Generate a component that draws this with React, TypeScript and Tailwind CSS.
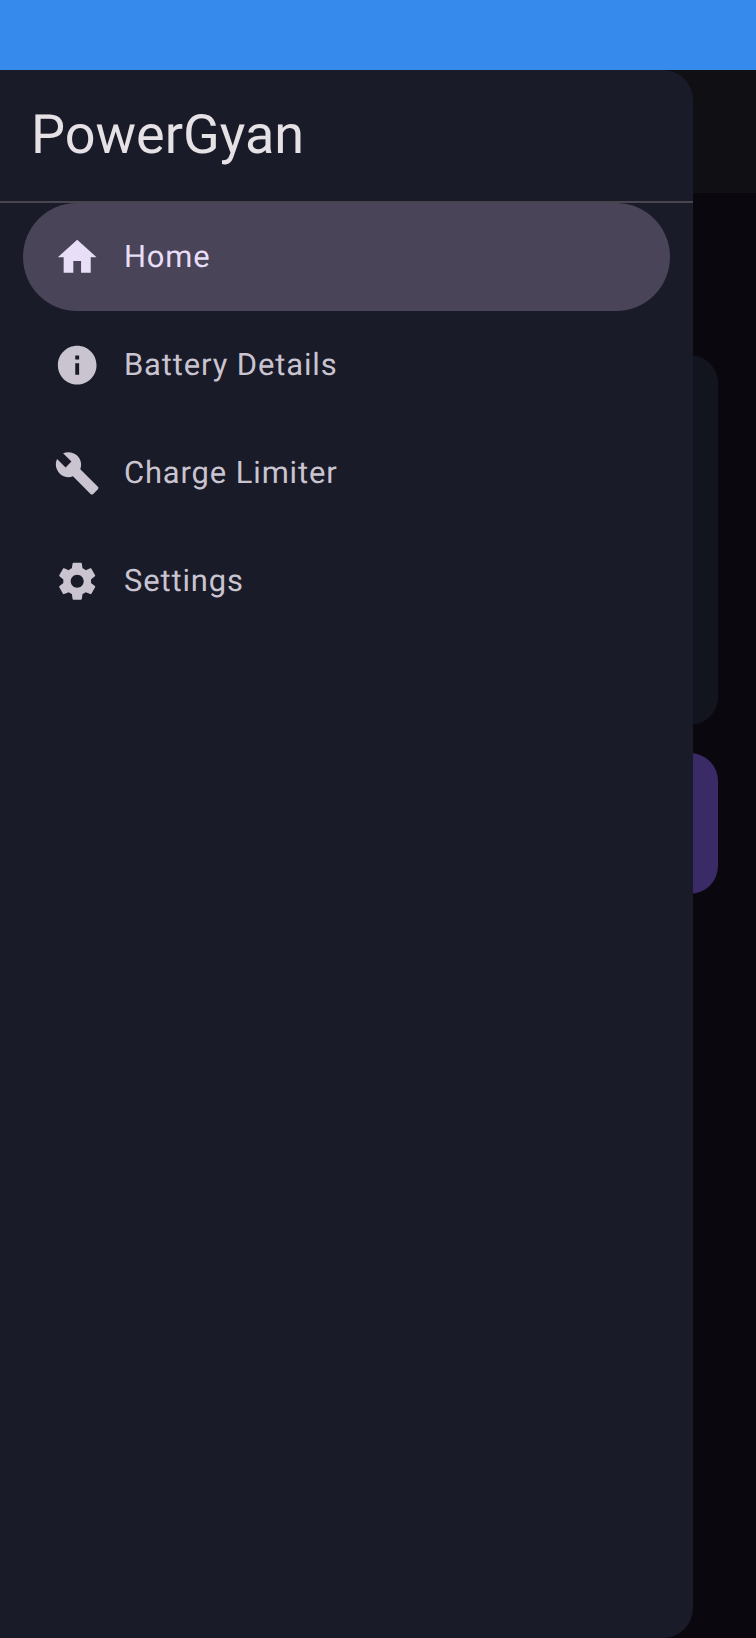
const items = [
  {
    label: "Home",
    box: "0 0 24 24",
    d: "M10 20v-6h4v6h5v-8h3L12 3 2 12h3v8z",
  },
  {
    label: "Battery Details",
    box: "0 0 24 24",
    d: "M12 2C6.48 2 2 6.48 2 12s4.48 10 10 10 10-4.48 10-10S17.52 2 12 2zm1 15h-2v-6h2v6zm0-8h-2V7h2v2z",
  },
  {
    label: "Charge Limiter",
    box: "0 0 24 24",
    d: "M22.7 19l-9.1-9.1c.9-2.3.4-5-1.5-6.9-2-2-5-2.4-7.4-1.3L9 6 6 9 1.6 4.7C.4 7.1.9 10.1 2.9 12.1c1.9 1.9 4.6 2.4 6.9 1.5l9.1 9.1c.4.4 1 .4 1.4 0l2.3-2.3c.5-.4.5-1.1.1-1.4z",
  },
  {
    label: "Settings",
    box: "-0.5 -0.5 25 25",
    d: "M19.43 12.98c.04-.32.07-.64.07-.98s-.03-.66-.07-.98l2.11-1.65c.19-.15.24-.42.12-.64l-2-3.46c-.12-.22-.39-.3-.61-.22l-2.49 1c-.52-.4-1.08-.73-1.69-.98l-.38-2.65C14.46 2.18 14.25 2 14 2h-4c-.25 0-.46.18-.49.42l-.38 2.65c-.61.25-1.17.59-1.69.98l-2.49-1c-.23-.09-.49 0-.61.22l-2 3.46c-.13.22-.07.49.12.64l2.11 1.65c-.04.32-.07.65-.07.98s.03.66.07.98l-2.11 1.65c-.19.15-.24.42-.12.64l2 3.46c.12.22.39.3.61.22l2.49-1c.52.4 1.08.73 1.69.98l.38 2.65c.03.24.24.42.49.42h4c.25 0 .46-.18.49-.42l.38-2.65c.61-.25 1.17-.59 1.69-.98l2.49 1c.23.09.49 0 .61-.22l2-3.46c.12-.22.07-.49-.12-.64l-2.11-1.65zM12 15.5c-1.93 0-3.5-1.57-3.5-3.5s1.57-3.5 3.5-3.5 3.5 1.57 3.5 3.5-1.57 3.5-3.5 3.5z",
  },
];

export default function App() {
  return (
    <div className="relative flex h-[1638px] w-[756px] flex-col overflow-hidden bg-[#0a070e] font-['Roboto',sans-serif] [text-rendering:geometricPrecision]">
      <div className="h-[70px] shrink-0 bg-[#368aeb]" />
      <div className="h-[123px] shrink-0 bg-[#101014]" />
      <div className="flex flex-col gap-[28px] pl-[38px] pr-[38px] pt-[162px]">
        <div className="h-[370px] rounded-[28px] bg-[#12141e]" />
        <div className="h-[141px] rounded-[28px] bg-[#3a2a66]" />
      </div>

      <aside className="absolute bottom-0 left-0 top-[70px] flex w-[693px] flex-col rounded-r-[30px] bg-[#191b28]">
        <div className="flex h-[133px] shrink-0 items-center border-b-2 border-[#49454f] pl-[31px]">
          <h1 className="text-[54px] font-normal leading-none text-[#e6e1e5]">PowerGyan</h1>
        </div>
        <nav className="flex flex-col px-[23px]">
          {items.map((item, i) => (
            <div
              key={item.label}
              className={
                i === 0
                  ? "flex h-[108px] items-center gap-[23.5px] rounded-full bg-[#4a4458] pl-[31px] text-[#e8def8]"
                  : "flex h-[108px] items-center gap-[23.5px] rounded-full pl-[31px] text-[#cac4d0]"
              }
            >
              <svg viewBox={item.box} fill="currentColor" className="h-[46.4px] w-[46.4px] shrink-0">
                <path d={item.d} />
              </svg>
              <span className="text-[30.9px] leading-none tracking-[0.9px]">{item.label}</span>
            </div>
          ))}
        </nav>
      </aside>
    </div>
  );
}
